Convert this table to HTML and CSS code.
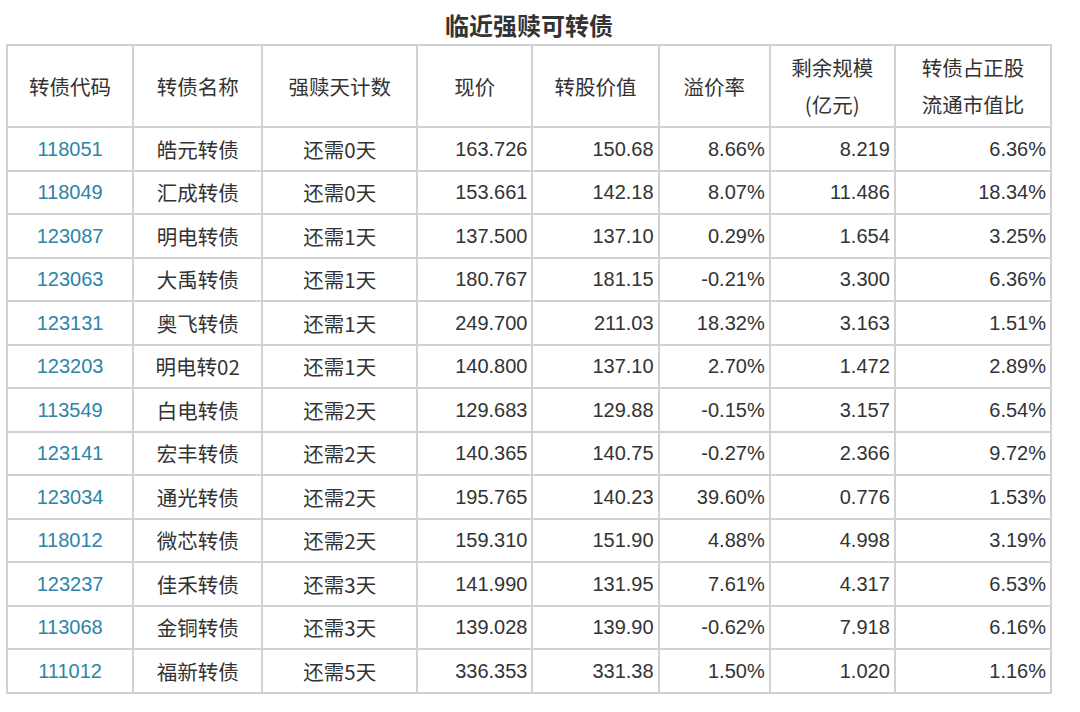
FILE: index.html
```html
<!DOCTYPE html>
<html lang="zh-CN">
<head>
<meta charset="utf-8">
<title>临近强赎可转债</title>
<link rel="stylesheet" href="styles.css">
</head>
<body>
<div class="wrap">
  <h1 class="title">临近强赎可转债</h1>
  <table class="grid">
    <colgroup>
      <col class="c1"><col class="c2"><col class="c3"><col class="c4">
      <col class="c5"><col class="c6"><col class="c7"><col class="c8">
    </colgroup>
    <thead>
      <tr>
        <th>转债代码</th><th>转债名称</th><th>强赎天计数</th><th class="left">现价</th>
        <th>转股价值</th><th class="left2">溢价率</th><th>剩余规模<br>(亿元)</th><th>转债占正股<br>流通市值比</th>
      </tr>
    </thead>
    <tbody>
      <tr><td class="code">118051</td><td class="ctr">皓元转债</td><td class="ctr">还需0天</td><td class="num">163.726</td><td class="num">150.68</td><td class="num">8.66%</td><td class="num">8.219</td><td class="num">6.36%</td></tr>
      <tr><td class="code">118049</td><td class="ctr">汇成转债</td><td class="ctr">还需0天</td><td class="num">153.661</td><td class="num">142.18</td><td class="num">8.07%</td><td class="num">11.486</td><td class="num">18.34%</td></tr>
      <tr><td class="code">123087</td><td class="ctr">明电转债</td><td class="ctr">还需1天</td><td class="num">137.500</td><td class="num">137.10</td><td class="num">0.29%</td><td class="num">1.654</td><td class="num">3.25%</td></tr>
      <tr><td class="code">123063</td><td class="ctr">大禹转债</td><td class="ctr">还需1天</td><td class="num">180.767</td><td class="num">181.15</td><td class="num">-0.21%</td><td class="num">3.300</td><td class="num">6.36%</td></tr>
      <tr><td class="code">123131</td><td class="ctr">奥飞转债</td><td class="ctr">还需1天</td><td class="num">249.700</td><td class="num">211.03</td><td class="num">18.32%</td><td class="num">3.163</td><td class="num">1.51%</td></tr>
      <tr><td class="code">123203</td><td class="ctr">明电转02</td><td class="ctr">还需1天</td><td class="num">140.800</td><td class="num">137.10</td><td class="num">2.70%</td><td class="num">1.472</td><td class="num">2.89%</td></tr>
      <tr><td class="code">113549</td><td class="ctr">白电转债</td><td class="ctr">还需2天</td><td class="num">129.683</td><td class="num">129.88</td><td class="num">-0.15%</td><td class="num">3.157</td><td class="num">6.54%</td></tr>
      <tr><td class="code">123141</td><td class="ctr">宏丰转债</td><td class="ctr">还需2天</td><td class="num">140.365</td><td class="num">140.75</td><td class="num">-0.27%</td><td class="num">2.366</td><td class="num">9.72%</td></tr>
      <tr><td class="code">123034</td><td class="ctr">通光转债</td><td class="ctr">还需2天</td><td class="num">195.765</td><td class="num">140.23</td><td class="num">39.60%</td><td class="num">0.776</td><td class="num">1.53%</td></tr>
      <tr><td class="code">118012</td><td class="ctr">微芯转债</td><td class="ctr">还需2天</td><td class="num">159.310</td><td class="num">151.90</td><td class="num">4.88%</td><td class="num">4.998</td><td class="num">3.19%</td></tr>
      <tr><td class="code">123237</td><td class="ctr">佳禾转债</td><td class="ctr">还需3天</td><td class="num">141.990</td><td class="num">131.95</td><td class="num">7.61%</td><td class="num">4.317</td><td class="num">6.53%</td></tr>
      <tr><td class="code">113068</td><td class="ctr">金铜转债</td><td class="ctr">还需3天</td><td class="num">139.028</td><td class="num">139.90</td><td class="num">-0.62%</td><td class="num">7.918</td><td class="num">6.16%</td></tr>
      <tr><td class="code">111012</td><td class="ctr">福新转债</td><td class="ctr">还需5天</td><td class="num">336.353</td><td class="num">331.38</td><td class="num">1.50%</td><td class="num">1.020</td><td class="num">1.16%</td></tr>
    </tbody>
  </table>
</div>
</body>
</html>
```

FILE: styles.css
```css
html, body {
  margin: 0;
  padding: 0;
  background: #ffffff;
}

body {
  font-family: "Liberation Sans", "Noto Sans CJK SC", sans-serif;
  color: #333333;
}

.wrap {
  padding-left: 6px;
  width: 1046px;
}

.title {
  margin: 0;
  height: 44px;
  line-height: 50px;
  font-size: 24px;
  font-weight: bold;
  text-align: center;
  color: #333333;
  font-family: "Noto Sans CJK SC", sans-serif;
}

.grid {
  border-collapse: collapse;
  width: 1046px;
  table-layout: fixed;
  font-size: 20px;
  border: 2px solid #d2d2d2;
}

.c1 { width: 126px; }
.c2 { width: 129px; }
.c3 { width: 155px; }
.c4 { width: 115px; }
.c5 { width: 126px; }
.c6 { width: 111px; }
.c7 { width: 125px; }
.c8 { width: 156px; }

.grid th,
.grid td {
  border: 2px solid #d2d2d2;
  padding: 0 4px;
  vertical-align: middle;
  white-space: nowrap;
}

.grid th {
  height: 80px;
  font-weight: normal;
  font-size: 20.5px;
  text-align: center;
  line-height: 37px;
  font-family: "Noto Sans CJK SC", sans-serif;
}

.grid th.left {
  text-align: left;
  padding-left: 36px;
}

.grid th.left2 {
  text-align: left;
  padding-left: 24px;
}

.grid td {
  height: 41.5px;
  line-height: 24px;
}

.code {
  text-align: center;
  color: #2c84a8;
}

.ctr {
  text-align: center;
  font-size: 20.5px;
  font-family: "Noto Sans CJK SC", sans-serif;
}

.num {
  text-align: right;
}
```
